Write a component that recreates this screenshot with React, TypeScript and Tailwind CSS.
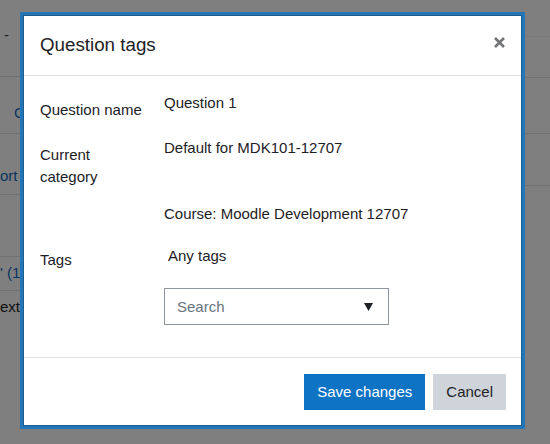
import React from "react";

const font = "font-['Liberation_Sans',Arial,sans-serif]";

const FormRow: React.FC<{
  label?: React.ReactNode;
  className?: string;
  children: React.ReactNode;
}> = ({ label, className, children }) => (
  <div className={`flex ${className ?? ""}`}>
    <div className="w-[124px] shrink-0 pr-[15px]">
      {label && <div className="pt-[7px] pb-[7px] leading-[22px]">{label}</div>}
    </div>
    <div className="flex-1 leading-[22px]">{children}</div>
  </div>
);

const BackgroundPage: React.FC = () => (
  <div className="flex h-full w-full justify-between text-[15px] text-[#1d2125]">
    {/* left strip visible beside the dialog */}
    <div className="w-[20px] overflow-hidden whitespace-nowrap">
      <div className="h-[77px] border-b border-[#dee2e6] pt-[24px] text-[#444]">
        <span className="ml-[4px]">-</span>
      </div>
      <div className="flex h-[57px] items-end border-b border-[#dee2e6] pb-[9px] pl-[14px] text-[#0f6cbf]">
        G
      </div>
      <div className="flex h-[61px] items-end border-b border-[#dee2e6] pb-[7px] text-[#0f6cbf]">
        ort
      </div>
      <div className="h-[62px] border-b border-[#dee2e6]" />
      <div className="flex h-[34px] items-center border-b border-[#dee2e6] text-[#0f6cbf]">
        ' (1)
      </div>
      <div className="flex h-[32px] items-center">ext '</div>
    </div>
    {/* right strip */}
    <div className="w-[25px]">
      <div className="h-[37px] border-b border-[#f2f2f2]" />
      <div className="h-[41px] border-b border-[#dee2e6]" />
      <div className="h-[56px] border-b border-[#dee2e6]" />
      <div className="h-[52px] border-b border-[#dee2e6]" />
    </div>
  </div>
);

export default function App() {
  return (
    <div className={`relative h-[444px] w-[550px] overflow-hidden bg-white ${font}`}>
      <BackgroundPage />

      <div className="absolute inset-0 bg-black/50 pl-[23px] pt-[15px]">
        <div className="flex h-[411px] w-[499px] flex-col border border-black/20 bg-white bg-clip-padding text-[15px] text-[#1d2125] ring-3 ring-[#2376b7]">
          {/* header */}
          <div className="flex h-[60px] shrink-0 items-center justify-between border-b border-[#dee2e6] px-4">
            <h5 className="text-[18.75px] leading-[22.5px]">Question tags</h5>
            <button className="-mt-[7px] flex h-[12px] w-[12px] items-center justify-center" aria-label="Close">
              <svg width="11" height="11" viewBox="0 0 11 11">
                <path d="M1 1 L10 10 M10 1 L1 10" stroke="#727476" strokeWidth="2.6" />
              </svg>
            </button>
          </div>

          {/* body */}
          <div className="h-[282px] shrink-0 border-b border-[#dee2e6] px-4 pt-4">
            <FormRow label="Question name" className="mb-[9px]">
              Question 1
            </FormRow>
            <FormRow label="Current category" className="mb-[8px]">
              Default for MDK101-12707
            </FormRow>
            <FormRow className="mb-[17px]">Course: Moodle Development 12707</FormRow>
            <FormRow label="Tags">
              <div className="pl-1 pt-[3px]">Any tags</div>
              <div className="mt-[21px] flex h-[37px] w-[225px] items-center justify-between border border-[#8f959e] pl-3 pr-[15px]">
                <span className="text-[#6a737b]">Search</span>
                <svg width="9" height="8" viewBox="0 0 9 8">
                  <polygon points="0,0 9,0 4.5,8" fill="#1d2125" />
                </svg>
              </div>
            </FormRow>
          </div>

          {/* footer */}
          <div className="flex flex-1 items-center justify-end gap-2 pr-[15px] pt-[1px]">
            <button className="border border-transparent bg-[#0f73c4] px-3 py-[6px] leading-[22.5px] text-white">
              Save changes
            </button>
            <button className="border border-transparent bg-[#ced4da] px-3 py-[6px] leading-[22.5px] text-[#1d2125]">
              Cancel
            </button>
          </div>
        </div>
      </div>
    </div>
  );
}
